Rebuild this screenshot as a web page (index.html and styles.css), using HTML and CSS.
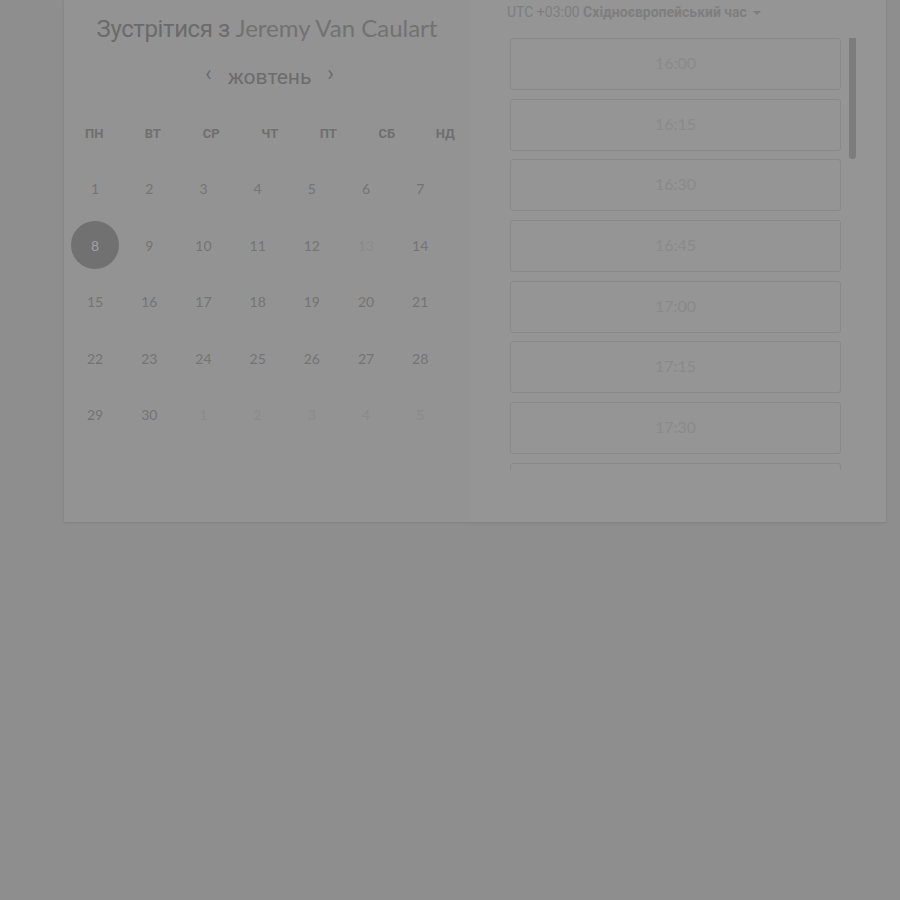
FILE: index.html
```html
<!DOCTYPE html>
<html lang="uk">
<head>
    <meta charset="UTF-8">
    <meta name="viewport" content="width=device-width, initial-scale=1.0">
    <title>Зустріч</title>
    <link rel="stylesheet" href="styles.css">
</head>
<body>
    <div class="booking">
        <!-- Calendar side -->
        <div class="calendar">
            <h1 class="title">Зустрітися з <span class="host">Jeremy Van Caulart</span></h1>

            <div class="month-nav">
                <span class="chev">&lsaquo;</span>
                <span class="month">жовтень</span>
                <span class="chev">&rsaquo;</span>
            </div>

            <div class="weekdays">
                <span>ПН</span><span>ВТ</span><span>СР</span><span>ЧТ</span><span>ПТ</span><span>СБ</span><span>НД</span>
            </div>

            <div class="days">
                <span>1</span><span>2</span><span>3</span><span>4</span><span>5</span><span>6</span><span>7</span>
                <span class="selected">8</span><span>9</span><span>10</span><span>11</span><span>12</span><span class="off">13</span><span>14</span>
                <span>15</span><span>16</span><span>17</span><span>18</span><span>19</span><span>20</span><span>21</span>
                <span>22</span><span>23</span><span>24</span><span>25</span><span>26</span><span>27</span><span>28</span>
                <span>29</span><span>30</span><span class="off">1</span><span class="off">2</span><span class="off">3</span><span class="off">4</span><span class="off">5</span>
            </div>
        </div>

        <!-- Time slots side -->
        <div class="times">
            <div class="tz">UTC +03:00 <b>Східноєвропейський час</b> <span class="caret"></span></div>

            <div class="slot-wrap">
                <div class="slots">
                    <div class="slot">16:00</div>
                    <div class="slot">16:15</div>
                    <div class="slot">16:30</div>
                    <div class="slot">16:45</div>
                    <div class="slot">17:00</div>
                    <div class="slot">17:15</div>
                    <div class="slot">17:30</div>
                    <div class="slot"></div>
                </div>
                <div class="scroll-thumb"></div>
            </div>
        </div>
    </div>
</body>
</html>
```

FILE: styles.css
```css
body {
    margin: 0;
    background: #8e8e8e;
    font-family: Roboto, "Noto Sans", sans-serif;
    height: 900px;
    overflow: hidden;
}

.booking {
    width: 822px;
    height: 522px;
    margin-left: 64px;
    display: grid;
    grid-template-columns: 406px 416px;
    box-shadow: 0 1px 3px rgba(0, 0, 0, 0.08), 0 0 2px rgba(0, 0, 0, 0.05);
}

/* left column */
.calendar {
    background: #939393;
    padding-top: 12px;
}

.title {
    margin: 0;
    font-size: 24px;
    line-height: 32px;
    font-weight: 400;
    text-align: center;
    color: #6b6b6b;
    letter-spacing: -0.4px;
}

.host {
    font-family: Lato, "Open Sans", sans-serif;
    color: #727272;
    letter-spacing: 0;
}

.month-nav {
    margin-top: 20px;
    height: 24px;
    display: flex;
    justify-content: center;
    align-items: center;
    gap: 16px;
    margin-left: 5px;
    color: #6c6c6c;
}

.month {
    font-size: 21px;
    line-height: 24px;
}

.chev {
    font-size: 22px;
    line-height: 24px;
    position: relative;
    top: -3px;
}

.weekdays {
    margin-top: 35px;
    display: grid;
    grid-template-columns: repeat(7, 58.5px);
    margin-left: 1px;
    font-size: 13px;
    font-weight: 700;
    line-height: 20px;
    color: #6f6f6f;
}

.weekdays span,
.days span {
    text-align: center;
}

.days {
    margin-top: 16.25px;
    margin-left: 4px;
    display: grid;
    grid-template-columns: repeat(7, 54.2px);
    grid-auto-rows: 56.5px;
    font-family: Lato, "Open Sans", sans-serif;
    font-size: 14px;
    color: #747474;
}

.days span {
    display: flex;
    justify-content: center;
    align-items: center;
}

.days .off {
    color: #8b8b8b;
}

.days .selected {
    width: 48px;
    height: 48px;
    margin: auto;
    border-radius: 50%;
    background: #717171;
    color: #a2a2a2;
}

/* right column */
.times {
    background: #959595;
    padding-top: 2px;
}

.tz {
    padding-left: 37px;
    font-size: 14px;
    line-height: 20px;
    color: #7e7e7e;
}

.tz b {
    font-weight: 700;
}

.caret {
    display: inline-block;
    width: 0;
    height: 0;
    border-left: 4px solid transparent;
    border-right: 4px solid transparent;
    border-top: 4px solid #7e7e7e;
    vertical-align: middle;
    margin-left: 3px;
}

.slot-wrap {
    position: relative;
    margin-top: 16px;
    margin-left: 40px;
    width: 346px;
    height: 432px;
    overflow: hidden;
}

.slots {
    width: 331px;
    display: flex;
    flex-direction: column;
    gap: 8.7px;
}

.slot {
    box-sizing: border-box;
    height: 52px;
    padding-bottom: 3px;
    border: 1px solid #898989;
    border-radius: 3px;
    display: flex;
    justify-content: center;
    align-items: center;
    font-family: Lato, "Open Sans", sans-serif;
    font-size: 16px;
    color: #8a8a8a;
}

.scroll-thumb {
    position: absolute;
    right: 0;
    top: -5px;
    width: 7px;
    height: 126px;
    border-radius: 4px;
    background: #7c7c7c;
}
```
